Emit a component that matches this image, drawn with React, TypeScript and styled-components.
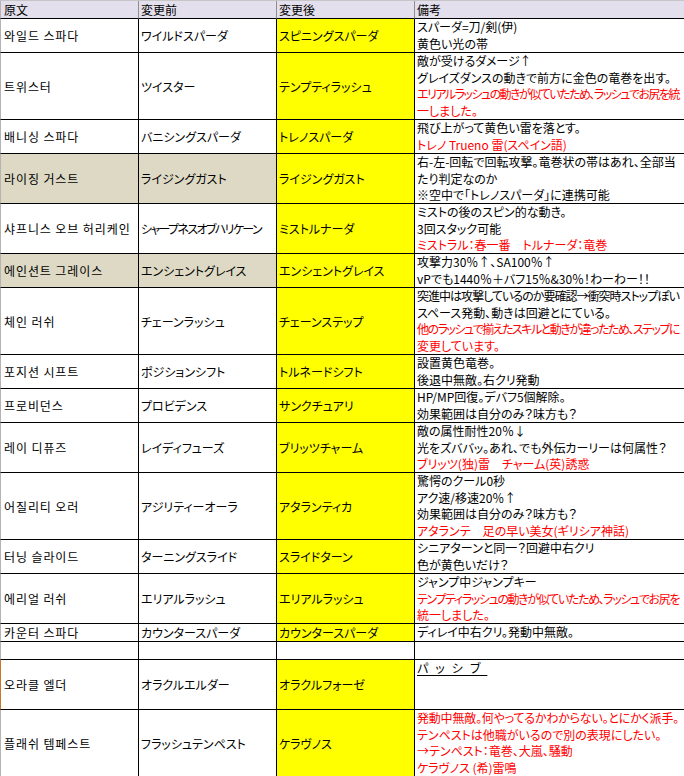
import React, { useLayoutEffect, useRef, useState } from "react";
import styled, { createGlobalStyle } from "styled-components";

const Global = createGlobalStyle`
  html, body { margin: 0; padding: 0; background: #ffffff; }
  body { overflow: hidden; width: 684px; height: 776px; }
`;

type Line = { t: string; red?: boolean; passive?: boolean };
type RowData = {
  ko: string;
  before: string;
  after: string;
  h: number;
  beige?: boolean;
  plainAfter?: boolean;
  accent?: boolean;
  notes: Line[];
};

const rows: RowData[] = [
  { ko: "와일드 스파다", before: "ワイルドスパーダ", after: "スピニングスパーダ", h: 34, notes: [{ t: "スパーダ=刀/剣(伊)" }, { t: "黄色い光の帯" }] },
  {
    ko: "트위스터", before: "ツイスター", after: "テンプティラッシュ", h: 67,
    notes: [
      { t: "敵が受けるダメージ↑" },
      { t: "グレイズダンスの動きで前方に金色の竜巻を出す。" },
      { t: "エリアルラッシュの動きが似ていたため、ラッシュでお尻を統", red: true },
      { t: "一しました。", red: true },
    ],
  },
  { ko: "배니싱 스파다", before: "バニシングスパーダ", after: "トレノスパーダ", h: 34, notes: [{ t: "飛び上がって黄色い雷を落とす。" }, { t: "トレノ Trueno 雷(スペイン語)", red: true }] },
  {
    ko: "라이징 거스트", before: "ライジングガスト", after: "ライジングガスト", h: 50, beige: true,
    notes: [{ t: "右-左-回転で回転攻撃。竜巻状の帯はあれ、全部当" }, { t: "たり判定なのか" }, { t: "※空中で「トレノスパーダ」に連携可能" }],
  },
  {
    ko: "샤프니스 오브 허리케인", before: "シャープネスオブハリケーン", after: "ミストルナーダ", h: 50,
    notes: [{ t: "ミストの後のスピン的な動き。" }, { t: "3回スタック可能" }, { t: "ミストラル：春一番　トルナーダ：竜巻", red: true }],
  },
  {
    ko: "에인션트 그레이스", before: "エンシェントグレイス", after: "エンシェントグレイス", h: 34, beige: true,
    notes: [{ t: "攻撃力30％↑、SA100％↑" }, { t: "vPでも1440％＋バフ15％&30％！わーわー！！" }],
  },
  {
    ko: "체인 러쉬", before: "チェーンラッシュ", after: "チェーンステップ", h: 67,
    notes: [
      { t: "突進中は攻撃しているのか要確認→衝突時ストップぽい" },
      { t: "スペース発動、動きは回避とにている。" },
      { t: "他のラッシュで揃えたスキルと動きが違ったため、ステップに", red: true },
      { t: "変更しています。", red: true },
    ],
  },
  { ko: "포지션 시프트", before: "ポジションシフト", after: "トルネードシフト", h: 34, notes: [{ t: "設置黄色竜巻。" }, { t: "後退中無敵。右クリ発動" }] },
  { ko: "프로비던스", before: "プロビデンス", after: "サンクチュアリ", h: 34, notes: [{ t: "HP/MP回復。デバフ5個解除。" }, { t: "効果範囲は自分のみ？味方も？" }] },
  {
    ko: "레이 디퓨즈", before: "レイディフューズ", after: "ブリッツチャーム", h: 50,
    notes: [{ t: "敵の属性耐性20％↓" }, { t: "光をズババッ。あれ、でも外伝カーリーは何属性？" }, { t: "ブリッツ(独)雷　チャーム(英)誘惑", red: true }],
  },
  {
    ko: "어질리티 오러", before: "アジリティーオーラ", after: "アタランティカ", h: 67,
    notes: [
      { t: "驚愕のクール0秒" },
      { t: "アク速/移速20％↑" },
      { t: "効果範囲は自分のみ？味方も？" },
      { t: "アタランテ　足の早い美女(ギリシア神話)", red: true },
    ],
  },
  { ko: "터닝 슬라이드", before: "ターニングスライド", after: "スライドターン", h: 34, notes: [{ t: "シニアターンと同一？回避中右クリ" }, { t: "色が黄色いだけ？" }] },
  {
    ko: "에리얼 러쉬", before: "エリアルラッシュ", after: "エリアルラッシュ", h: 50,
    notes: [
      { t: "ジャンプ中ジャンプキー" },
      { t: "テンプティラッシュの動きが似ていたため、ラッシュでお尻を", red: true },
      { t: "統一しました。", red: true },
    ],
  },
  { ko: "카운터 스파다", before: "カウンタースパーダ", after: "カウンタースパーダ", h: 18, notes: [{ t: "ディレイ中右クリ。発動中無敵。" }] },
  { ko: "", before: "", after: "", h: 18, plainAfter: true, notes: [] },
  { ko: "오라클 엘더", before: "オラクルエルダー", after: "オラクルフォーゼ", h: 50, accent: true, notes: [{ t: "パッシブ", passive: true }] },
  {
    ko: "플래쉬 템페스트", before: "フラッシュテンペスト", after: "ケラヴノス", h: 67,
    notes: [
      { t: "発動中無敵。何やってるかわからない。とにかく派手。", red: true },
      { t: "テンペストは他職がいるので別の表現にしたい。", red: true },
      { t: "→テンペスト：竜巻、大嵐、騒動", red: true },
      { t: "ケラヴノス (希)雷鳴", red: true },
    ],
  },
];

/* Tightens letter spacing at runtime when a line is wider than the room it has
   (the reference font has much narrower small kana than Noto Sans CJK). */
function Fit({ text, max }: { text: string; max: number }) {
  const ref = useRef<HTMLSpanElement>(null);
  const [ls, setLs] = useState<number | null>(null);
  useLayoutEffect(() => {
    const el = ref.current;
    if (!el || ls !== null) return;
    const w = el.getBoundingClientRect().width;
    const n = Math.max(1, [...text].length);
    setLs(w > max ? (max - w) / n : 0);
  }, [text, max, ls]);
  return (
    <FitSpan ref={ref} style={ls ? { letterSpacing: `${ls}px` } : undefined}>
      {text}
    </FitSpan>
  );
}

const FitSpan = styled.span`
  display: inline-block;
  white-space: nowrap;
`;

const Sheet = styled.div`
  width: 684px;
  height: 776px;
  overflow: hidden;
  display: flex;
  flex-direction: column;
  font-size: 12px;
  color: #000000;
`;

const Row = styled.div<{ $h: number }>`
  display: grid;
  grid-template-columns: 139px 138px 138px 1fr;
  height: ${(p) => p.$h}px;
  flex: none;
`;

const HeaderRow = styled.div`
  display: grid;
  grid-template-columns: 139px 138px 138px 1fr;
  height: 19px;
  flex: none;
  border-top: 1px solid #c6c6c6;
  box-sizing: border-box;
`;

const HeadCell = styled.div<{ $first?: boolean; $last?: boolean }>`
  box-sizing: border-box;
  background: #e4dfec;
  border-bottom: 1px solid #000000;
  border-right: ${(p) => (p.$last ? "none" : "1px solid #8e8e8e")};
  border-left: ${(p) => (p.$first ? "1px solid #b4b4b4" : "none")};
  padding-left: ${(p) => (p.$first ? "3px" : "2px")};
  font-family: "Noto Sans CJK JP", sans-serif;
  line-height: 17px;
  white-space: nowrap;
  overflow: hidden;
`;

const Cell = styled.div<{ $bg?: string; $first?: boolean; $accent?: boolean; $ko?: boolean }>`
  box-sizing: border-box;
  background: ${(p) => p.$bg || "#ffffff"};
  border-bottom: 1px solid #000000;
  border-right: 1px solid #000000;
  border-left: ${(p) => (p.$first ? `1px solid ${p.$accent ? "#c8782c" : "#b4b4b4"}` : "none")};
  padding-left: ${(p) => (p.$first ? "3px" : "2px")};
  display: flex;
  align-items: center;
  font-family: ${(p) => (p.$ko ? '"Noto Sans CJK KR", sans-serif' : '"Noto Sans CJK JP", sans-serif')};
  font-feature-settings: ${(p) => (p.$ko ? "normal" : '"palt" 1')};
  letter-spacing: ${(p) => (p.$ko ? "0.9px" : "0px")};
  white-space: nowrap;
  overflow: hidden;
`;

const NoteCell = styled.div`
  box-sizing: border-box;
  background: #ffffff;
  border-bottom: 1px solid #000000;
  padding-left: 2px;
  display: flex;
  flex-direction: column;
  font-family: "Noto Sans CJK JP", sans-serif;
  font-feature-settings: "palt" 1;
  letter-spacing: 0px;
  overflow: hidden;
`;

const NoteLine = styled.div<{ $red?: boolean }>`
  line-height: 16.67px;
  height: 16.67px;
  white-space: nowrap;
  color: ${(p) => (p.$red ? "#ff0000" : "#000000")};
`;

const Passive = styled.span`
  text-decoration: underline;
  text-underline-offset: 2px;
  letter-spacing: 7px;
`;

export default function App() {
  return (
    <>
      <Global />
      <Sheet>
        <HeaderRow>
          <HeadCell $first>原文</HeadCell>
          <HeadCell>変更前</HeadCell>
          <HeadCell>変更後</HeadCell>
          <HeadCell $last>備考</HeadCell>
        </HeaderRow>
        {rows.map((r, i) => (
          <Row key={i} $h={r.h}>
            <Cell $first $ko $accent={r.accent} $bg={r.beige ? "#ddd9c4" : undefined}>
              {r.ko}
            </Cell>
            <Cell $bg={r.beige ? "#ddd9c4" : undefined}>
              <Fit text={r.before} max={120} />
            </Cell>
            <Cell $bg={r.plainAfter ? "#ffffff" : "#ffff00"}>
              <Fit text={r.after} max={120} />
            </Cell>
            <NoteCell>
              {r.notes.map((n, j) => (
                <NoteLine key={j} $red={n.red}>
                  {n.passive ? <Passive>{n.t}</Passive> : <Fit text={n.t} max={262} />}
                </NoteLine>
              ))}
            </NoteCell>
          </Row>
        ))}
      </Sheet>
    </>
  );
}
